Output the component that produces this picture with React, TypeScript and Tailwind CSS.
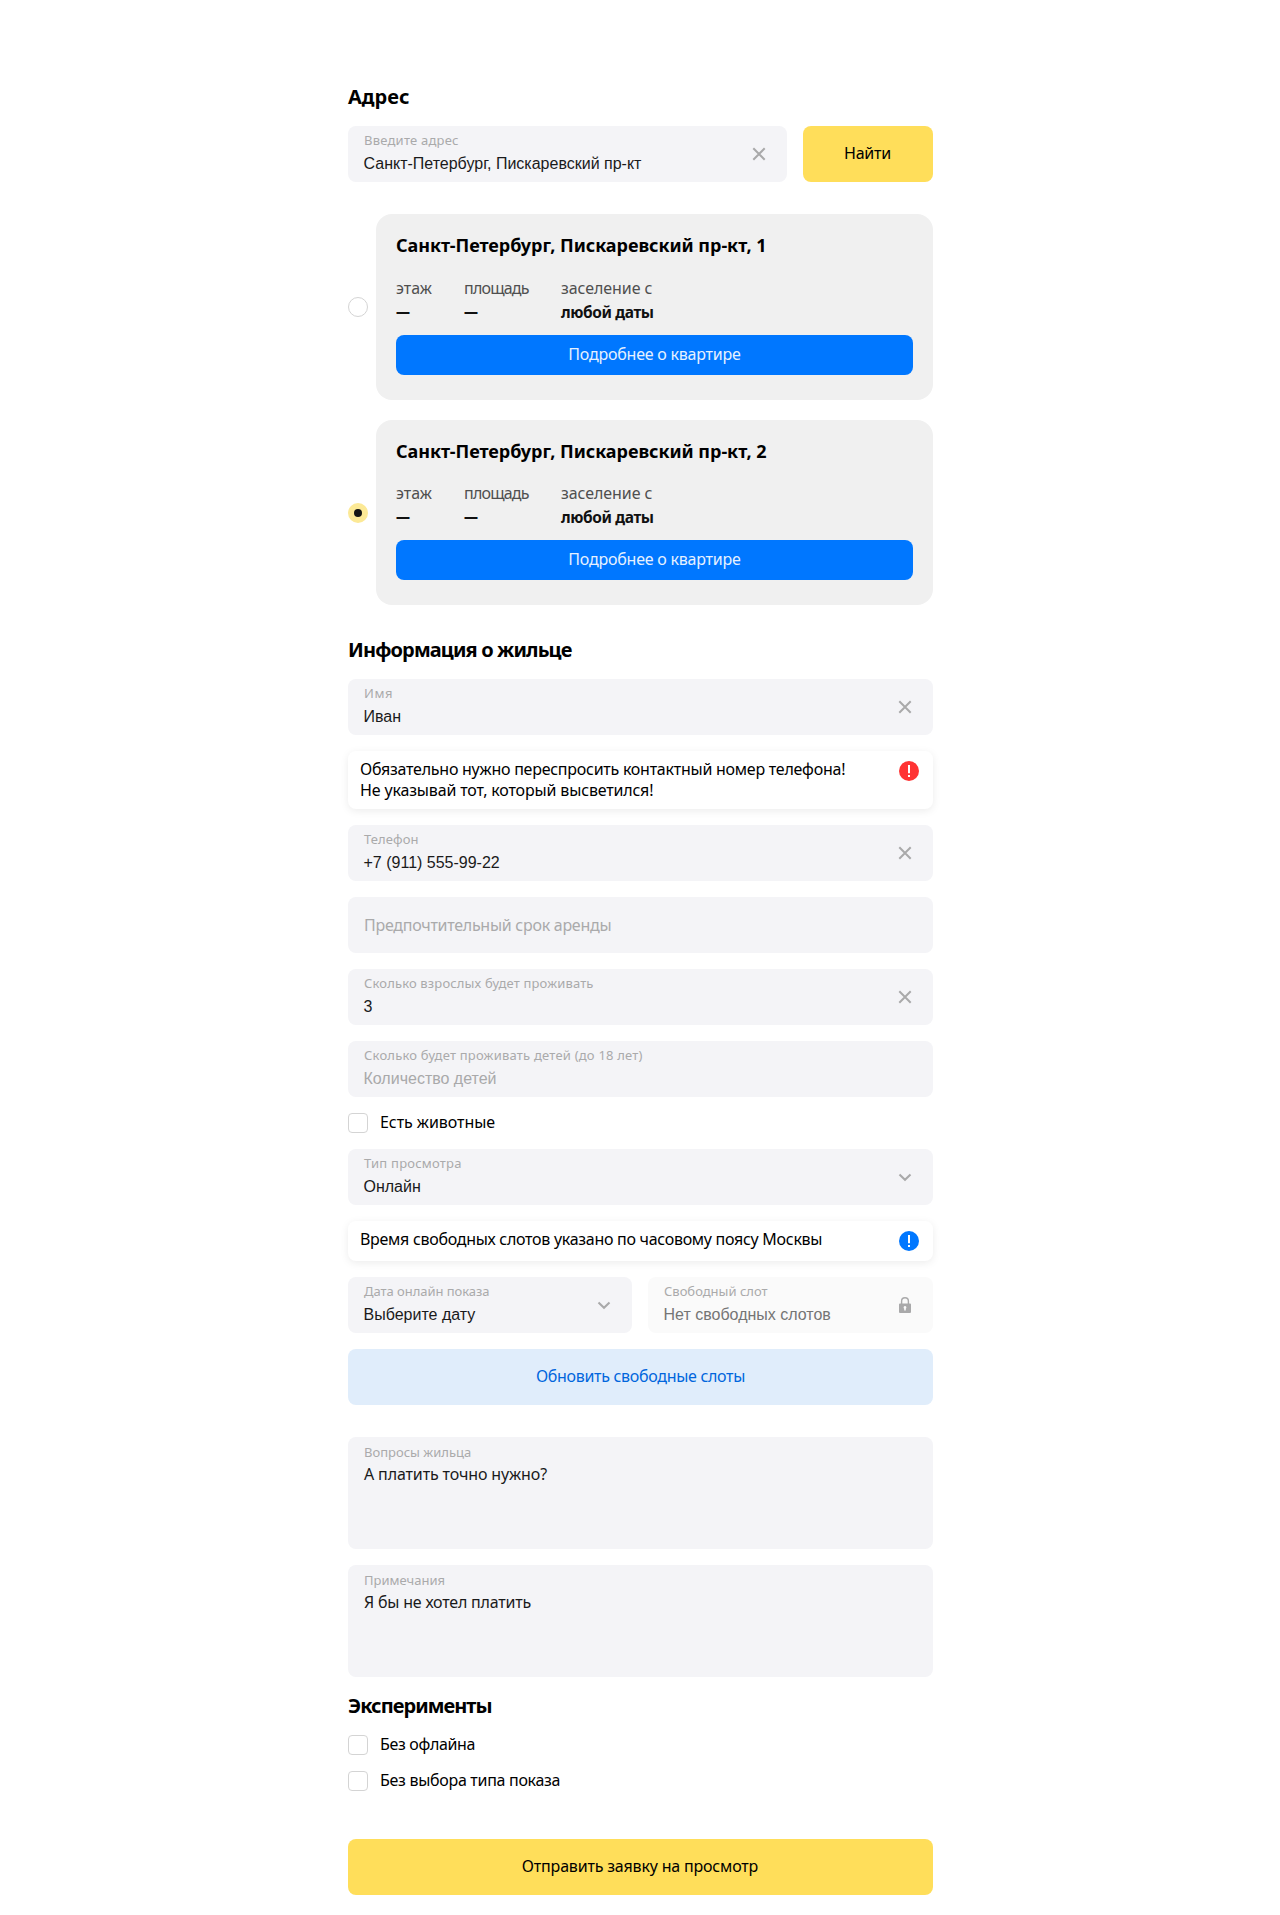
import type { ReactNode } from "react";

function CrossIcon() {
  return (
    <svg width="24" height="24" viewBox="0 0 24 24" fill="none" stroke="#a9a9aa" strokeWidth="2" className="shrink-0">
      <path d="M6.300 6.300l11.400 11.400M17.700 6.300L6.300 17.700" />
    </svg>
  );
}

function ChevronIcon() {
  return (
    <svg width="24" height="24" viewBox="0 0 24 24" fill="none" stroke="#a9a9aa" strokeWidth="2.1" className="shrink-0">
      <path d="M6.500 9.500l5.500 5.200 5.500-5.200" />
    </svg>
  );
}

function LockIcon() {
  return (
    <svg width="24" height="24" viewBox="0 0 24 24" fill="none" className="shrink-0">
      <path d="M8.6 11V8.2a3.4 3.4 0 0 1 6.8 0V11" stroke="#a9a9aa" strokeWidth="1.4" />
      <path
        fillRule="evenodd"
        clipRule="evenodd"
        fill="#a9a9aa"
        d="M7 10.5h10a1 1 0 0 1 1 1V19a1 1 0 0 1-1 1H7a1 1 0 0 1-1-1v-7.500a1 1 0 0 1 1-1zM12 13a1.500 1.500 0 0 0-.8 2.700V17.500h1.600v-1.800A1.500 1.500 0 0 0 12 13z"
      />
    </svg>
  );
}

function AlertIcon({ color }: { color: string }) {
  return (
    <svg width="20" height="20" viewBox="0 0 20 20" className="shrink-0">
      <circle cx="10" cy="10" r="10" fill={color} />
      <path d="M9 4h2v8.200H9z" fill="#fff" />
      <rect x="9" y="14" width="2" height="2" fill="#fff" />
    </svg>
  );
}

type FieldProps = {
  label: string;
  labelClass: string;
  value: string;
  valueClass?: string;
  icon?: ReactNode;
  boxClass?: string;
};

function Field({ label, labelClass, value, valueClass = "text-[#1a1a1b]", icon, boxClass = "bg-[#f4f4f7]" }: FieldProps) {
  return (
    <div className={`flex h-14 items-center justify-between rounded-lg px-4 ${boxClass}`}>
      <div className="flex h-14 flex-col pt-1.5">
        <span className={`text-[13px] leading-4 whitespace-nowrap text-[#aaaaab] ${labelClass}`}>{label}</span>
        <span className={`mt-1.5 -ml-[0.5px] font-['Liberation_Sans',sans-serif] text-base leading-5 whitespace-nowrap ${valueClass}`}>
          {value}
        </span>
      </div>
      {icon}
    </div>
  );
}

function TextArea({ label, labelClass, value, valueClass }: { label: string; labelClass: string; value: string; valueClass: string }) {
  return (
    <div className="flex h-28 flex-col rounded-lg bg-[#f4f4f7] px-4 pt-[7px]">
      <span className={`text-[13px] leading-4 text-[#aaaaab] ${labelClass}`}>{label}</span>
      <span className={`mt-1 text-base leading-5 text-[#1a1a1b] ${valueClass}`}>{value}</span>
    </div>
  );
}

function Notice({ color, children }: { color: string; children: ReactNode }) {
  return (
    <div className="flex min-h-10 items-start justify-between rounded-lg bg-white pt-2 pr-3.5 pb-2 pl-3 shadow-[0_2px_8px_rgba(0,0,0,0.08)]">
      <div className="text-base leading-[21px] whitespace-nowrap">{children}</div>
      <div className="pt-[2px]">
        <AlertIcon color={color} />
      </div>
    </div>
  );
}

function Checkbox({ label, labelClass }: { label: string; labelClass: string }) {
  return (
    <div className="flex h-5 items-center gap-3">
      <span className="size-5 rounded-[4px] border border-[#d4d4d4] bg-white" />
      <span className={`pb-[2px] text-base leading-5 ${labelClass}`}>{label}</span>
    </div>
  );
}

function Flat({ title, titleClass, checked }: { title: string; titleClass: string; checked?: boolean }) {
  return (
    <div className="flex items-center gap-2">
      {checked ? (
        <span className="mt-px flex size-5 shrink-0 items-center justify-center rounded-full bg-[#fce996]">
          <span className="size-2 rounded-full bg-[#151515]" />
        </span>
      ) : (
        <span className="size-5 shrink-0 rounded-full border border-[#d4d4d4] bg-white" />
      )}
      <div className="h-[185.6px] flex-1 rounded-2xl bg-[#f0f0f0] px-5 pt-5">
        <div className={`text-[18px] leading-[22px] font-bold whitespace-nowrap ${titleClass}`}>{title}</div>
        <div className="mt-[19.8px] flex gap-8 text-base leading-6 whitespace-nowrap">
          <div className="w-9">
            <div className="text-[#4f4f4f]">этаж</div>
            <Dash />
          </div>
          <div className="w-[65px]">
            <div className="tracking-[-0.8px] text-[#4f4f4f]">площадь</div>
            <Dash />
          </div>
          <div>
            <div className="tracking-[-0.06px] text-[#4f4f4f]">заселение с</div>
            <div className="text-[15.5px] leading-6 font-bold tracking-[-0.4px] text-[#111]">любой даты</div>
          </div>
        </div>
        <div className="mt-[11px] flex h-10 items-center justify-center rounded-lg bg-[#0077ff] pb-[2px] text-base tracking-[-0.225px] text-[#e6f1ff]">
          Подробнее о квартире
        </div>
      </div>
    </div>
  );
}

function Dash() {
  return <div className="text-[14px] leading-6 font-black text-[#111]">—</div>;
}

function Heading({ children, className }: { children: ReactNode; className: string }) {
  return <h2 className={`text-[20px] leading-6 font-bold whitespace-nowrap ${className}`}>{children}</h2>;
}

export default function App() {
  return (
    <div className="flex min-h-[1915px] justify-center bg-white font-['Noto_Sans',sans-serif] text-black">
      <div className="mr-[-1px] flex w-[585px] flex-col pt-[85px]">
        <Heading className="">Адрес</Heading>
        <div className="mt-[17px] grid grid-cols-[439px_130px] gap-4">
          <Field label="Введите адрес" labelClass="tracking-[0.22px]" value="Санкт-Петербург, Пискаревский пр-кт" icon={<CrossIcon />} />
          <div className="flex h-14 items-center justify-center rounded-lg bg-[#ffde5a] pr-px pb-[2px] text-base tracking-[-0.25px]">Найти</div>
        </div>

        <div className="mt-8 flex flex-col gap-5">
          <Flat title="Санкт-Петербург, Пискаревский пр-кт, 1" titleClass="tracking-[-0.04px]" />
          <Flat title="Санкт-Петербург, Пискаревский пр-кт, 2" titleClass="tracking-[-0.04px]" checked />
        </div>

        <Heading className="mt-[32.8px] tracking-[-0.87px]">Информация о жильце</Heading>
        <div className="mt-[17px] flex flex-col gap-4">
          <Field label="Имя" labelClass="tracking-[0.58px]" value="Иван" icon={<CrossIcon />} />
          <Notice color="#ff3333">
            <p className="tracking-[-0.25px]">Обязательно нужно переспросить контактный номер телефона!</p>
            <p className="tracking-[-0.156px]">Не указывай тот, который высветился!</p>
          </Notice>
          <Field label="Телефон" labelClass="tracking-[0.09px]" value="+7 (911) 555-99-22" icon={<CrossIcon />} />
          <div className="flex h-14 items-center rounded-lg bg-[#f4f4f7] px-4 text-base tracking-[-0.27px] text-[#aaaaab]">
            Предпочтительный срок аренды
          </div>
          <Field label="Сколько взрослых будет проживать" labelClass="tracking-[0.15px]" value="3" icon={<CrossIcon />} />
          <Field
            label="Сколько будет проживать детей (до 18 лет)"
            labelClass="tracking-[0.208px]"
            value="Количество детей"
            valueClass="text-[#a9a9aa]"
          />
          <Checkbox label="Есть животные" labelClass="tracking-[-0.06px]" />
          <Field label="Тип просмотра" labelClass="tracking-[0.22px]" value="Онлайн" icon={<ChevronIcon />} />
          <Notice color="#0077ff">
            <p className="tracking-[-0.288px]">Время свободных слотов указано по часовому поясу Москвы</p>
          </Notice>
          <div className="grid grid-cols-[284px_285px] gap-4">
            <Field label="Дата онлайн показа" labelClass="tracking-[-0.04px]" value="Выберите дату" icon={<ChevronIcon />} />
            <Field
              label="Свободный слот"
              labelClass=""
              value="Нет свободных слотов"
              valueClass="text-[#757575]"
              boxClass="bg-[#fafafa]"
              icon={<LockIcon />}
            />
          </div>
          <div className="flex h-14 items-center justify-center rounded-lg bg-[#e0edfb] pb-[2px] text-base tracking-[-0.305px] text-[#0066dd]">
            Обновить свободные слоты
          </div>
        </div>

        <div className="mt-8 flex flex-col gap-4">
          <TextArea label="Вопросы жильца" labelClass="" value="А платить точно нужно?" valueClass="tracking-[-0.13px]" />
          <TextArea label="Примечания" labelClass="" value="Я бы не хотел платить" valueClass="tracking-[-0.2px]" />
        </div>

        <Heading className="mt-[17px] tracking-[-0.96px]">Эксперименты</Heading>
        <div className="mt-[17px] flex flex-col gap-4">
          <Checkbox label="Без офлайна" labelClass="tracking-[-0.336px]" />
          <Checkbox label="Без выбора типа показа" labelClass="tracking-[-0.297px]" />
        </div>

        <div className="mt-12 flex h-14 items-center justify-center rounded-lg bg-[#ffde5a] pr-px pb-[2px] text-base tracking-[-0.185px]">
          Отправить заявку на просмотр
        </div>
      </div>
    </div>
  );
}
